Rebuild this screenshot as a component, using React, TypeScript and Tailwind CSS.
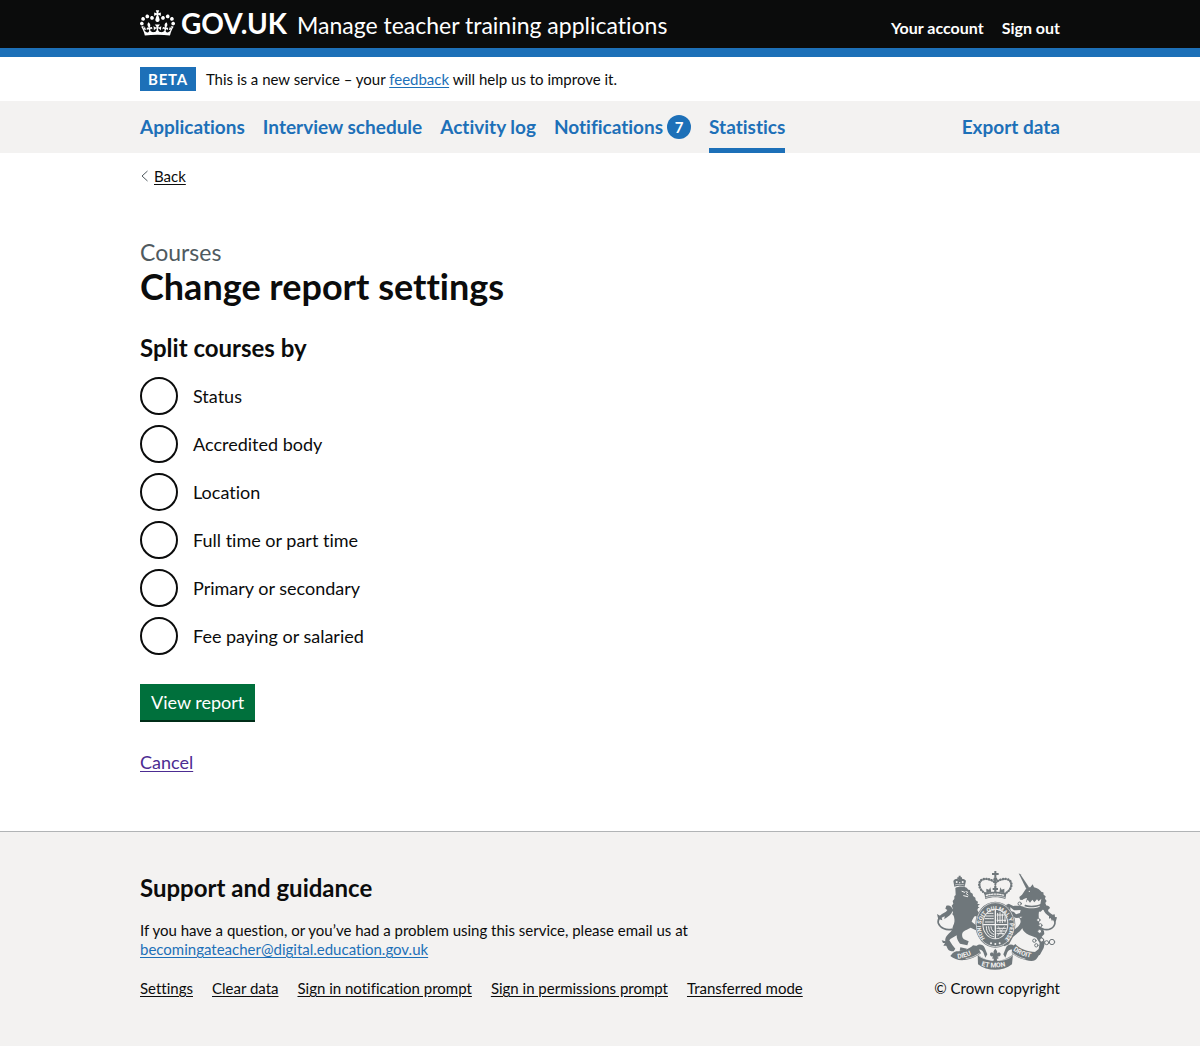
import type { ReactNode } from 'react';

const navItems = [
  { label: 'Applications' },
  { label: 'Interview schedule' },
  { label: 'Activity log' },
  { label: 'Notifications', count: 7 },
  { label: 'Statistics', current: true },
];

const splitOptions = [
  { id: 'status', label: 'Status' },
  { id: 'accredited-body', label: 'Accredited body' },
  { id: 'location', label: 'Location' },
  { id: 'study-mode', label: 'Full time or part time' },
  { id: 'phase', label: 'Primary or secondary' },
  { id: 'funding', label: 'Fee paying or salaried' },
];

const footerLinks = [
  'Settings',
  'Clear data',
  'Sign in notification prompt',
  'Sign in permissions prompt',
  'Transferred mode',
];

function Container({ children, className = '' }: { children: ReactNode; className?: string }) {
  return <div className={`mx-auto w-full max-w-[980px] px-[30px] ${className}`}>{children}</div>;
}

function CrownIcon() {
  return (
    <svg aria-hidden="true" viewBox="0 0 132 97" className="h-[26px] w-[35px] shrink-0" fill="currentColor">
      <path
        fillRule="evenodd"
        d="M25 30.2c3.5 1.5 7.7-.2 9.1-3.7 1.5-3.6-.2-7.8-3.9-9.2-3.6-1.4-7.6.3-9.1 3.9-1.4 3.5.3 7.5 3.9 9zM9 39.5c3.6 1.5 7.8-.2 9.2-3.7 1.5-3.6-.2-7.8-3.9-9.1-3.6-1.5-7.6.2-9.1 3.8-1.4 3.5.3 7.5 3.8 9zM4.4 57.2c3.5 1.5 7.7-.2 9.1-3.8 1.5-3.6-.2-7.7-3.9-9.1-3.5-1.5-7.6.3-9.1 3.8-1.4 3.5.3 7.6 3.9 9.1zm38.3-21.4c3.5 1.5 7.7-.2 9.1-3.8 1.5-3.6-.2-7.7-3.9-9.1-3.6-1.5-7.6.3-9.1 3.8-1.3 3.6.4 7.7 3.9 9.1zm64.4-5.6c-3.6 1.5-7.8-.2-9.1-3.7-1.5-3.6.2-7.8 3.8-9.2 3.6-1.4 7.7.3 9.2 3.9 1.3 3.5-.4 7.5-3.9 9zm15.9 9.3c-3.6 1.5-7.7-.2-9.1-3.7-1.5-3.6.2-7.8 3.7-9.1 3.6-1.5 7.7.2 9.2 3.8 1.5 3.5-.3 7.5-3.8 9zm4.7 17.7c-3.6 1.5-7.8-.2-9.2-3.8-1.5-3.6.2-7.7 3.9-9.1 3.6-1.5 7.7.3 9.2 3.8 1.3 3.5-.4 7.6-3.9 9.1zM89.3 35.8c-3.6 1.5-7.8-.2-9.2-3.8-1.4-3.6.2-7.7 3.9-9.1 3.6-1.5 7.7.3 9.2 3.8 1.4 3.6-.3 7.7-3.9 9.1zM69.7 17.7l8.9 4.7V9.3l-8.9 2.8c-.2-.3-.5-.6-.9-.9L72.4 0H59.6l3.5 11.2c-.3.3-.6.5-.9.9l-8.8-2.8v13.1l8.8-4.7c.3.3.6.7.9.9l-5 15.4v.1c-.2.8-.4 1.6-.4 2.4 0 4.1 3.1 7.5 7 8.1h.2c.3 0 .7.1 1 .1.4 0 .7 0 1-.1h.2c4-.6 7.1-4.1 7.1-8.1 0-.8-.1-1.7-.4-2.4V34l-5.1-15.4c.4-.2.7-.6 1-.9zM66 92.8c16.9 0 32.8 1.1 47.1 3.2 4-16.9 8.9-26.7 14-33.5l-9.6-3.4c1 4.9 1.1 7.2 0 10.2-1.5-1.4-3-4.3-4.2-8.7L108.6 76c2.8-2 5-3.2 7.5-3.3-4.4 9.4-10 11.9-13.6 11.2-4.3-.8-6.3-4.6-5.6-7.9 1-4.7 5.7-5.9 8-.5 4.3-8.7-3-11.4-7.6-8.8 7.1-7.2 7.9-13.5 2.1-21.1-8 6.1-8.1 12.3-4.5 20.8-4.7-5.4-12.1-2.5-9.5 6.2 3.4-5.2 7.9-2 7.2 3.1-.6 4.3-6.4 7.8-13.5 7.2-10.3-.9-10.9-8-11.2-13.8 2.5-.5 7.1 1.8 11 7.3L80.2 60c-4.1 4.4-8 5.3-12.3 5.4 1.4-4.4 8-11.6 8-11.6H55.5s6.4 7.2 7.9 11.6c-4.2-.1-8-1-12.3-5.4l1.4 16.4c3.9-5.5 8.5-7.7 10.9-7.3-.3 5.8-.9 12.8-11.1 13.8-7.2.6-12.9-2.9-13.5-7.2-.7-5 3.8-8.3 7.1-3.1 2.7-8.7-4.6-11.6-9.4-6.2 3.7-8.5 3.6-14.7-4.6-20.8-5.8 7.6-5 13.9 2.2 21.1-4.7-2.6-11.9.1-7.7 8.8 2.3-5.5 7.1-4.2 8.1.5.7 3.3-1.3 7.1-5.7 7.9-3.5.7-9-1.8-13.5-11.2 2.5.1 4.7 1.3 7.5 3.3l-4.7-15.4c-1.2 4.4-2.7 7.2-4.3 8.7-1.1-3-.9-5.3 0-10.2l-9.5 3.4c5 6.9 9.9 16.7 14 33.5 14.8-2.1 30.8-3.2 47.7-3.2z"
      />
    </svg>
  );
}

function RoyalArms() {
  return (
    <svg
      aria-hidden="true"
      viewBox="36 33 360 297"
      className="h-[99px] w-[120px]"
      fill="#6f777b"
      stroke="#6f777b"
      strokeWidth="0"
      strokeLinejoin="round"
      strokeLinecap="round"
    >
      {/* Lion: tail, body and crown */}
      <path fill="none" strokeWidth="5" d="M80 208C64 212 45 204 40 190c-3-12 4-20 14-26" />
      <path d="M36 162l9 5c8-8 18-9 22-17l-6-4 3-9c12-3 20 5 18 17-3 11-14 16-24 24l1-9-9 4 2 8-9-3-1 9z" />
      <path d="M91 84c10-6 24-6 34-1l5 6 5 1 1 7 7 4 1 7 7 5 1 7 6 6-1 8 3 8-3 8 6 12-2 10-11-4c-4 4-8 10-10 17l16 13-3 13-16-8c-8 4-15 7-22 12-6 6-4 17 2 23l14 6-4 12-22-5c-7-8-10-16-10-25-8 5-18 9-22 15l9 14 9 11-5 8c-10 0-15-2-18-8-5-10-9-20-7-29 3-12 14-18 18-24 4-8 4-15 8-22 3-10 1-17-1-24l-4-4 2-6-4-6 3-6-3-8 5-6-2-8 5-6 0-8 4-4z" />
      <path d="M70 246l-20-5 4 8 6 0-5 8 12 0zM143 132l16-8-3 8 9 0-8 7 7 4-13 3zM106 262l20 4-6 7-16-1z" />
      <g stroke="#f3f2f1" fill="none" strokeWidth="3">
        <path d="M111 94l8 3M123 95l5 2M116 107l12 3M124 101l5 4" />
      </g>
      <path d="M88 80l-3-17c4-7 13-9 18-4 5-5 15-4 20 3l-4 18c-9-4-20-4-31 0z" />
      <path d="M101 47h6v5h4v5h-4v5h-6v-5h-4v-5h4z" />
      <g fill="#f3f2f1">
        <circle cx="95" cy="66" r="3" />
        <circle cx="113" cy="66" r="3" />
        <circle cx="104" cy="68" r="2" />
        <path d="M90 74c8-3 18-3 28 0v2c-10-3-19-3-28 0z" />
      </g>

      {/* Unicorn: horn, head, body and tail */}
      <path d="M281 40l5 3 26 39-8 5z" />
      <path d="M302 88l8-6 6 0 7-9 4 9c10 2 18 8 23 14l5 1 1 7 6 5-2 7 5 7-4 6 3 8-6 4 3 10-8-2-6 6-44-2c-4-2-6-8-6-12l6-14 3-13c-6 1-10 3-14 6l-7-1-2-8 8-7z" />
      <path d="M300 140l44 2c0 8-3 14-3 22 0 14 3 24 1 32 10 6 16 14 16 26l-8 8 10 16-4 18-12 22-9-6-6-3 12-10 3-18-10-16-22-8c-12-6-18-12-20-20-8 12-20 18-28 26l-12 22-14 6-4-8 12-10 4-18 12-10c12-8 20-14 24-24 2-6 0-11-3-16l-10 1-13-6-1-14 8 2 6 7 12-4 2-9-20 1-11-9-9 0-4-7 8-4 14 7c10-2 24 0 35 3z" />
      <path d="M256 136l-8-4 5 9-6 3 9 5z" />
      <g fill="#f3f2f1">
        <path d="M295 120l9 7 4-8 7 9 7-9 6 8 8-9 5 6 8-8-3 16c-12 6-36 7-49 1z" />
        <path d="M296 138c14 5 34 5 48-1v3c-14 6-34 6-48 1z" />
        <circle cx="313" cy="94" r="2" />
      </g>
      <path fill="none" strokeWidth="5" d="M352 206c18 8 36-2 38-17 0-12-10-17-18-25" />
      <path d="M372 168c-10-6-20-16-15-27 4-7 16-6 18 3l-6 6c0 6 8 10 14 14l6-1 1 8 6 1-4 14-8-8-3 6-4-10-5 2z" />
      <g fill="#f3f2f1" strokeWidth="3">
        <circle cx="340" cy="180" r="5" />
        <circle cx="346" cy="196" r="5" />
        <circle cx="344" cy="214" r="6" />
        <circle cx="328" cy="242" r="5" />
        <circle cx="334" cy="256" r="5" />
        <circle cx="350" cy="240" r="6" />
        <circle cx="365" cy="248" r="6" />
        <circle cx="381" cy="246" r="8" />
        <circle cx="284" cy="131" r="5" />
        <circle cx="288" cy="172" r="4" />
      </g>

      {/* Garter and shield */}
      <ellipse cx="211" cy="194" rx="60" ry="69" />
      <ellipse cx="211" cy="194" rx="57" ry="66" fill="none" stroke="#f3f2f1" strokeWidth="2" />
      <ellipse cx="211" cy="192" rx="39" ry="46" fill="#f3f2f1" />
      <ellipse cx="211" cy="192" rx="36" ry="43" />
      <g fill="none" stroke="#f3f2f1" strokeWidth="3">
        <path d="M211 150v84M176 194h70" strokeWidth="4" />
        <path
          d="M182 168h23M180 176h25M181 186h24M187 160h17M218 160v28M225 158v30M232 162v26M240 170v16M216 165h24M216 181h28"
          strokeDasharray="5 2"
        />
        <path d="M184 200c0 20 10 28 22 30M191 200c1 14 6 20 15 23M198 200c1 8 3 12 8 15M216 205h27M216 213h26M216 221h20" />
        <path d="M220 200l14 24M238 200l-20 28" strokeWidth="2" />
      </g>
      <path id="garter-arc" fill="none" d="M180 235A43 50 0 1 1 242 235" />
      <text fill="#f3f2f1" fontSize="17" fontWeight="700" fontFamily="Roboto, sans-serif">
        <textPath href="#garter-arc">HONI SOIT QUI MAL Y PENSE</textPath>
      </text>
      <g fill="#f3f2f1">
        <circle cx="198" cy="250" r="3" />
        <circle cx="211" cy="252" r="3" />
        <circle cx="224" cy="250" r="3" />
      </g>

      {/* Crown above the garter */}
      <path d="M178 100c20-6 46-6 66 0l-3 17c-19-7-41-7-60 0z" />
      <path d="M208 33h6v6h7v6h-7v8h-6v-8h-7v-6h7z" />
      <circle cx="211" cy="58" r="6" />
      <g fill="none">
        <path
          d="M181 100c-25-14-23-40-4-43 14-2 27 4 34 12 7-8 20-14 34-12 19 3 21 29-4 43"
          strokeWidth="7"
          strokeDasharray="1 7"
        />
        <path d="M181 100c-22-15-20-38-4-41 14-2 27 4 34 12 7-8 20-14 34-12 16 3 18 26-4 41" strokeWidth="2" />
        <path d="M211 66v30" strokeWidth="6" strokeDasharray="1 6" />
      </g>
      <path d="M203 84h5v-5h6v5h5v6h-5v8h-6v-8h-5zM184 86l8 3 4-7 3 15-15 2zM238 86l-8 3-4-7-3 15 15 2z" />
      <g fill="none" stroke="#f3f2f1">
        <path d="M184 106c17-5 37-5 54 0" strokeWidth="4" strokeDasharray="4 4" />
        <path d="M183 112c18-5 38-5 56 0" strokeWidth="2" />
      </g>

      {/* Motto ribbon */}
      <path d="M76 288c5-5 9-13 18-14 20 0 42-8 50-18l13 2 11 22c-14 10-28 18-48 20-18 2-32-2-44-12z" />
      <path d="M160 280c-9-7-11-17-5-23 8-7 20-3 24 6l8 20-6 10-6-16c-4-7-11-10-15-7-3 3-2 7 2 11z" />
      <path d="M262 280c9-7 11-17 5-23-8-7-20-3-24 6l-8 20 6 10 6-16c4-7 11-10 15-7 3 3 2 7-2 11z" />
      <path d="M262 260l9-8c10 12 30 22 62 24l10-7 3 10-9 14c-7 12-18 11-35 7-16-4-32-11-42-21z" />
      <path d="M158 282c8 10 22 15 30 17 14 4 32 4 46 0 10-3 22-8 30-17l-3 31c-28 22-74 22-102 0z" />
      <path
        fill="none"
        stroke="#f3f2f1"
        strokeWidth="2"
        d="M160 286c14 18 88 24 102 0M260 277c12 10 24 16 40 20M163 280c-12 8-24 14-40 16"
      />
      <path id="dieu-arc" fill="none" d="M98 296q30-3 54-20" />
      <path id="mon-arc" fill="none" d="M169 317q42 13 88-3" />
      <path id="droit-arc" fill="none" d="M264 271q24 18 62 24" />
      <g fill="#f3f2f1" fontSize="20" fontWeight="700" fontFamily="Roboto, sans-serif">
        <text>
          <textPath href="#dieu-arc">DIEU</textPath>
        </text>
        <text>
          <textPath href="#mon-arc">ET MON</textPath>
        </text>
        <text>
          <textPath href="#droit-arc">DROIT</textPath>
        </text>
      </g>
      <path d="M211 266c6 6 7 10 4 16 4-6 12-6 12 1 0 5-4 8-8 6l-2 3h3v4h-5l2 6-6 4-6-4 2-6h-5v-4h3l-2-3c-4 2-8-1-8-6 0-7 8-7 12-1-3-6-2-10 4-16z" />
    </svg>
  );
}

export default function App() {
  return (
    <div className="flex min-h-screen flex-col bg-white font-[Lato,sans-serif] text-[18px] leading-6 text-[#0b0c0c] [font-variant-ligatures:none]">
      <header className="border-b-[9px] border-[#1d70b8] bg-[#0b0c0c] text-white">
        <Container className="flex h-12 items-center justify-between">
          <div className="flex items-center">
            <a href="#" className="flex items-center gap-[6px] pb-[2px] text-[28px] leading-[30px] font-bold">
              <CrownIcon />
              <span>GOV.UK</span>
            </a>
            <a href="#" className="ml-[10px] pt-[2px] text-[23px] leading-7">
              Manage teacher training applications
            </a>
          </div>
          <nav aria-label="Account" className="flex gap-[18px] pt-2 text-[16px] leading-5 font-bold">
            <a href="#">Your account</a>
            <a href="#">Sign out</a>
          </nav>
        </Container>
      </header>

      <Container className="flex items-center gap-[10px] py-[10px] text-[15px]">
        <strong className="bg-[#1d70b8] px-2 tracking-wider text-white">BETA</strong>
        <p>
          This is a new service – your{' '}
          <a href="#" className="text-[#1d70b8] underline underline-offset-2">
            feedback
          </a>{' '}
          will help us to improve it.
        </p>
      </Container>

      <div className="bg-[#f3f2f1] text-[19px] font-bold text-[#1d70b8]">
        <Container>
          <nav aria-label="Primary" className="flex justify-between">
            <ul className="flex gap-[18px]">
              {navItems.map((item) => (
                <li key={item.label}>
                  <a
                    href="#"
                    aria-current={item.current ? 'page' : undefined}
                    className={`flex h-[52px] items-center gap-1 border-b-[5px] pt-[5px] ${
                      item.current ? 'border-[#1d70b8]' : 'border-transparent'
                    }`}
                  >
                    {item.label}
                    {item.count && (
                      <span className="flex size-6 items-center justify-center rounded-full bg-[#1d70b8] text-[15px] text-white">
                        {item.count}
                      </span>
                    )}
                  </a>
                </li>
              ))}
            </ul>
            <a href="#" className="flex h-[52px] items-center border-b-[5px] border-transparent pt-[5px]">
              Export data
            </a>
          </nav>
        </Container>
      </div>

      <Container className="grow pb-12">
        <a href="#" className="mt-[11px] inline-flex items-center gap-[5px] text-[15px]">
          <svg aria-hidden="true" viewBox="0 0 9 12" className="h-3 w-[9px]" fill="none" stroke="#505a5f">
            <path d="M7.500 1 2 6l5.500 5" />
          </svg>
          <span className="underline underline-offset-2">Back</span>
        </a>

        <main className="pt-[50px]">
          <h1 className="text-[36px] leading-10 font-bold">
            <span className="block text-[23px] leading-7 font-normal text-[#505a5f]">Courses</span>
            Change report settings
          </h1>

          <form className="mt-7" onSubmit={(event) => event.preventDefault()}>
            <fieldset>
              <legend className="mb-[15px] text-[24px] leading-7 font-bold">Split courses by</legend>
              <div className="flex flex-col items-start gap-[10px]">
                {splitOptions.map((option) => (
                  <div key={option.id} className="flex items-center">
                    <input
                      type="radio"
                      id={option.id}
                      name="split-by"
                      value={option.id}
                      className="size-[38px] appearance-none rounded-full border-2 border-[#0b0c0c] bg-white checked:bg-[#0b0c0c] checked:bg-clip-content checked:p-[7px]"
                    />
                    <label htmlFor={option.id} className="pr-4 pl-[15px]">
                      {option.label}
                    </label>
                  </div>
                ))}
              </div>
            </fieldset>
            <button
              type="submit"
              className="mt-[29px] block border-b-2 border-[#002d18] bg-[#00703c] px-[11px] py-[6px] text-white"
            >
              View report
            </button>
          </form>

          <p className="mt-7">
            <a href="#" className="text-[#4c2c92] underline underline-offset-2">
              Cancel
            </a>
          </p>
        </main>
      </Container>

      <footer className="border-t border-[#b1b4b6] bg-[#f3f2f1] pt-[39px] pb-12 text-[15px] leading-5">
        <Container className="flex items-end justify-between gap-8">
          <div>
            <h2 className="mb-[19px] text-[24px] leading-7 font-bold">Support and guidance</h2>
            <p className="leading-[19px]">
              If you have a question, or you’ve had a problem using this service, please email us at
              <br />
              <a
                href="mailto:becomingateacher@digital.education.gov.uk"
                className="text-[#1d70b8] underline underline-offset-2"
              >
                becomingateacher@digital.education.gov.uk
              </a>
            </p>
            <ul className="mt-[19px] flex flex-wrap gap-x-[19px]">
              {footerLinks.map((link) => (
                <li key={link}>
                  <a href="#" className="underline underline-offset-2">
                    {link}
                  </a>
                </li>
              ))}
            </ul>
          </div>
          <a href="#" className="flex shrink-0 flex-col items-center gap-2">
            <RoyalArms />
            © Crown copyright
          </a>
        </Container>
      </footer>
    </div>
  );
}
